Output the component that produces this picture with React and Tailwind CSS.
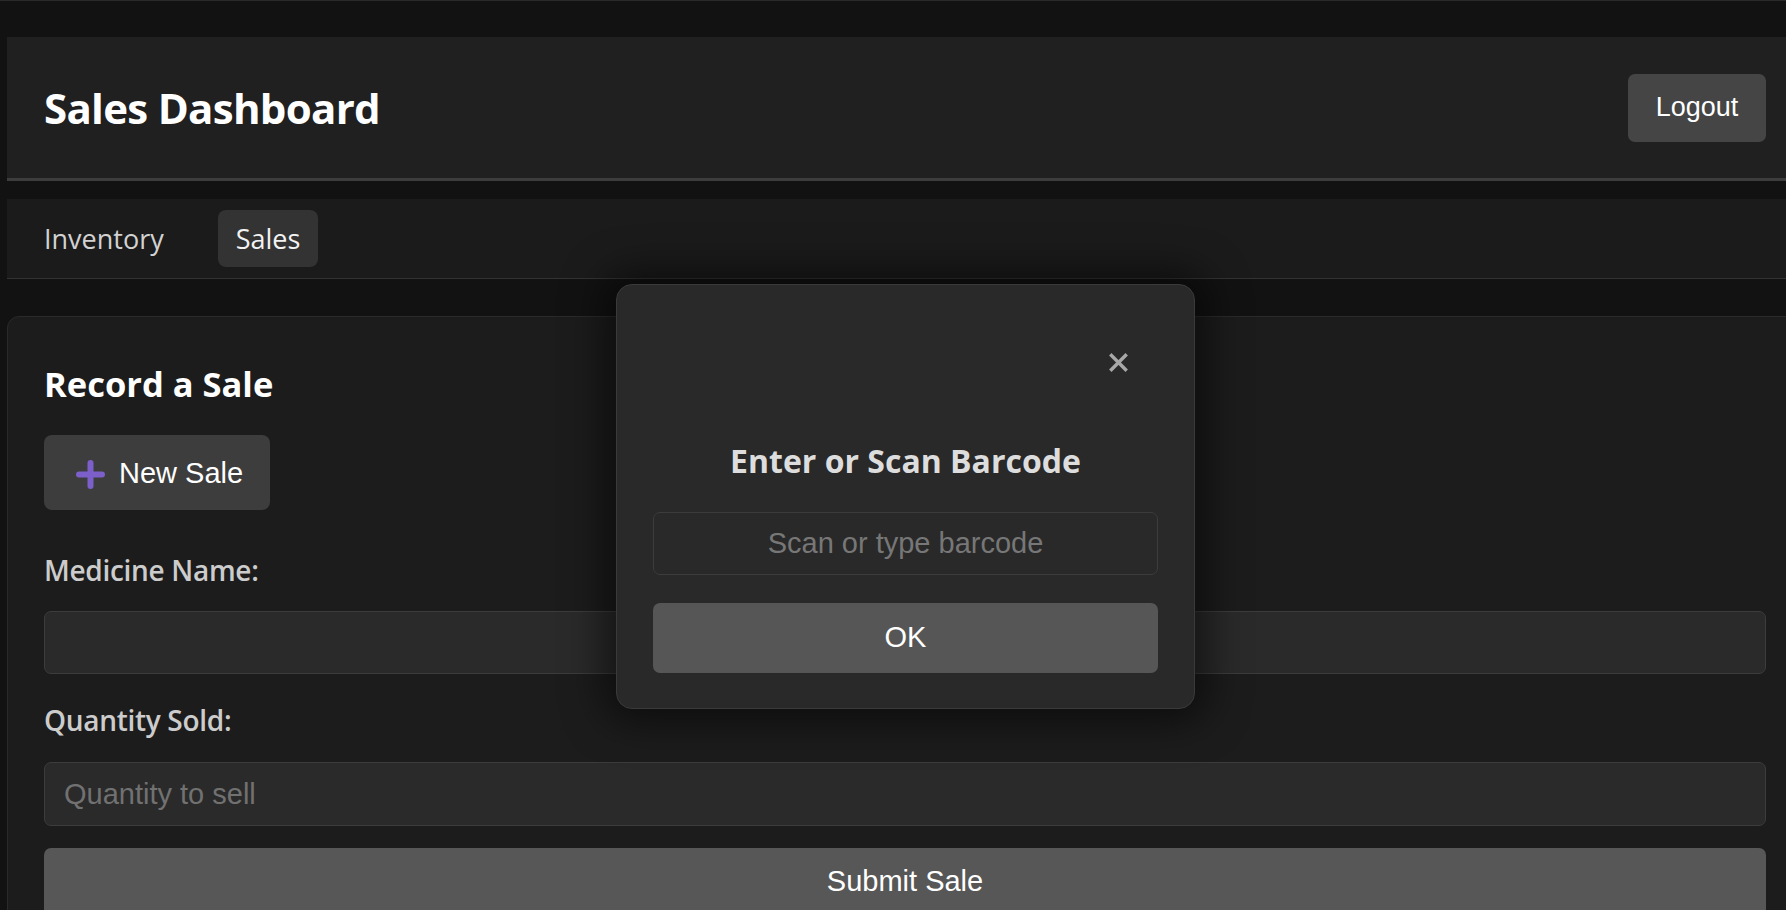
import React from "react";

function PlusIcon() {
  return (
    <svg width="29" height="29" viewBox="0 0 29 29" className="shrink-0">
      <line x1="14.5" y1="3" x2="14.5" y2="26" stroke="#7c5fc9" strokeWidth="6" strokeLinecap="round" />
      <line x1="3" y1="14.5" x2="26" y2="14.5" stroke="#7c5fc9" strokeWidth="6" strokeLinecap="round" />
    </svg>
  );
}

export default function App() {
  return (
    <div className="relative h-[910px] w-full overflow-hidden border-t border-[#2a2a2a] bg-[#121212] font-['Open_Sans','Noto_Sans',sans-serif]">
      <div className="ml-[7px] w-[1796px] pt-[36px]">
        {/* Header */}
        <header className="flex h-[144px] items-center justify-between border-b-[3px] border-[#3d3d3d] bg-[#202020] px-[37px]">
          <h1 className="text-[42px] font-bold leading-[54px] tracking-[-0.7px] text-white">Sales Dashboard</h1>
          <button className="flex h-[68px] w-[138px] items-center justify-center rounded-[7px] bg-[#454545] font-['Liberation_Sans',Arial,sans-serif] text-[27px] text-white">
            Logout
          </button>
        </header>

        {/* Nav */}
        <nav className="mt-[18px] flex h-[80px] items-center border-b border-[#333333] bg-[#1b1b1b] pl-[19px]">
          <a className="flex h-[57px] items-center px-[18px] pt-[2px] text-[27px] text-[#d2d2d2]">Inventory</a>
          <a className="ml-[36px] flex h-[57px] items-center rounded-[8px] bg-[#333333] px-[18px] pt-[2px] text-[27px] text-[#f2f2f2]">
            Sales
          </a>
        </nav>

        {/* Card */}
        <section className="mt-[37px] rounded-[12px] border border-[#2a2a2a] bg-[#1c1c1c] px-[36px] pt-[45px] pb-[40px]">
          <h2 className="text-[34.5px] font-bold leading-[44px] text-white">Record a Sale</h2>
          <button className="mt-[29px] flex h-[75px] w-[226px] items-center gap-[14px] rounded-[8px] bg-[#3d3d3d] pl-[32px] pt-[3px] font-['Liberation_Sans',Arial,sans-serif] text-[29px] text-white">
            <PlusIcon />
            <span>New Sale</span>
          </button>

          <label className="mt-[45px] block text-[28px] font-semibold leading-[30px] tracking-[-0.3px] text-[#cccccc]">
            Medicine Name:
          </label>
          <input className="mt-[26px] block h-[63px] w-full rounded-[7px] border border-[#3c3c3c] bg-[#2a2a2a] px-[19px] font-['Liberation_Sans',Arial,sans-serif] text-[29px] text-white outline-none" />

          <label className="mt-[31px] block text-[28px] font-semibold leading-[30px] tracking-[-0.3px] text-[#cccccc]">
            Quantity Sold:
          </label>
          <input
            placeholder="Quantity to sell"
            className="mt-[27px] block h-[64px] w-full rounded-[7px] border border-[#3c3c3c] bg-[#2a2a2a] px-[19px] font-['Liberation_Sans',Arial,sans-serif] text-[29px] text-white outline-none placeholder:text-[#717171]"
          />

          <button className="mt-[22px] flex h-[68px] w-full items-center justify-center rounded-[7px] bg-[#575757] font-['Liberation_Sans',Arial,sans-serif] text-[29px] text-white">
            Submit Sale
          </button>
        </section>
      </div>

      {/* Modal */}
      <div className="absolute left-[616px] top-[283px] flex h-[425px] w-[579px] flex-col rounded-[16px] border border-[#3a3a3a] bg-[#292929] px-[36px] shadow-[0_0_40px_12px_rgba(0,0,0,0.55)]">
        <div className="mt-[68px] flex h-[20px] justify-end pr-[30px]">
          <svg width="19" height="19" viewBox="0 0 19 19">
            <line x1="2.5" y1="2.5" x2="16.5" y2="16.5" stroke="#a8a8a8" strokeWidth="3.4" strokeLinecap="square" />
            <line x1="16.5" y1="2.5" x2="2.5" y2="16.5" stroke="#a8a8a8" strokeWidth="3.4" strokeLinecap="square" />
          </svg>
        </div>
        <h3 className="mt-[68px] text-center text-[32px] font-bold leading-[40px] text-[#dddddd]">Enter or Scan Barcode</h3>
        <input
          placeholder="Scan or type barcode"
          className="mt-[31px] block h-[63px] w-full rounded-[7px] border border-[#3c3c3c] bg-[#292929] px-[19px] text-center font-['Liberation_Sans',Arial,sans-serif] text-[29px] text-white outline-none placeholder:text-[#777777]"
        />
        <button className="mt-[28px] flex h-[70px] w-full items-center justify-center rounded-[7px] bg-[#565656] font-['Liberation_Sans',Arial,sans-serif] text-[29px] text-white">
          OK
        </button>
      </div>
    </div>
  );
}
